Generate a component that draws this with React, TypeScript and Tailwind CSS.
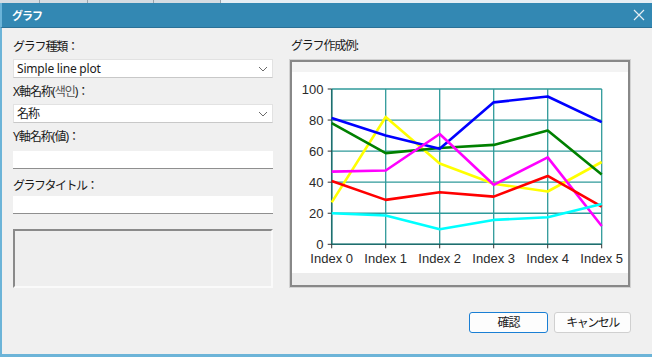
import React from "react";

const XS = [331.7, 385.7, 439.7, 493.7, 547.7, 601.7];
const Y0 = 244.3;
const K = 1.553;
const yOf = (v: number) => Y0 - v * K;

const SERIES: { color: string; data: number[] }[] = [
  { color: "#00ff00", data: [] },
  { color: "#ffff00", data: [27, 82, 52, 39, 34, 53] },
  { color: "#008000", data: [78, 58.7, 62, 64, 73.3, 45] },
  { color: "#0000ff", data: [81.3, 70, 61.5, 91.4, 95.2, 78.7] },
  { color: "#ff00ff", data: [46.8, 47.5, 71, 38.3, 56, 11.8] },
  { color: "#ff0000", data: [40.8, 28.6, 33.5, 30.7, 44, 24.3] },
  { color: "#00ffff", data: [20, 18.5, 9.7, 15.7, 17.4, 26] },
];

const font = { fontFamily: '"Noto Sans", "Noto Sans CJK JP", sans-serif' };
const chartFont = '"Liberation Sans", Arial, sans-serif';

function Chevron() {
  return (
    <svg width="10" height="6" viewBox="0 0 10 6" className="mr-[4px]">
      <path d="M1 1 L5 5 L9 1" fill="none" stroke="#6a6a6a" strokeWidth="1" />
    </svg>
  );
}

function Chart() {
  const gridYs = [0, 20, 40, 60, 80, 100];
  return (
    <svg width="336" height="201" viewBox="292 72 336 201" className="block">
      <rect x="292" y="72" width="336" height="201" fill="#ffffff" />
      {gridYs.map((g) => (
        <line key={"h" + g} x1={XS[0]} x2={XS[5]} y1={yOf(g)} y2={yOf(g)} stroke="#2f9a9a" strokeWidth="1.3" />
      ))}
      {XS.map((x, i) => (
        <line key={"v" + i} x1={x} x2={x} y1={yOf(100)} y2={Y0} stroke="#2f9a9a" strokeWidth="1.3" />
      ))}
      <line x1={XS[0]} x2={XS[5]} y1={Y0} y2={Y0} stroke="#1f6e6e" strokeWidth="1.5" />
      <line x1={XS[0]} x2={XS[0]} y1={yOf(100)} y2={Y0} stroke="#1f6e6e" strokeWidth="1.5" />
      {gridYs.map((g) => (
        <line key={"ty" + g} x1={XS[0] - 4} x2={XS[0]} y1={yOf(g)} y2={yOf(g)} stroke="#333" strokeWidth="1" />
      ))}
      {XS.map((x, i) => (
        <line key={"tx" + i} x1={x} x2={x} y1={Y0} y2={Y0 + 4} stroke="#333" strokeWidth="1" />
      ))}
      {SERIES.filter((s) => s.data.length).map((s) => (
        <polyline
          key={s.color}
          points={s.data.map((v, i) => `${XS[i]},${yOf(v)}`).join(" ")}
          fill="none"
          stroke={s.color}
          strokeWidth="2.6"
          strokeLinejoin="round"
        />
      ))}
      {gridYs.map((g) => (
        <text
          key={"l" + g}
          x={323.5}
          y={yOf(g) + 4.6}
          textAnchor="end"
          fontSize="13"
          fontFamily={chartFont}
          fill="#2a2a2a"
        >
          {g}
        </text>
      ))}
      {XS.map((x, i) => (
        <text
          key={"xl" + i}
          x={x}
          y={262.8}
          textAnchor="middle"
          fontSize="13"
          fontFamily={chartFont}
          fill="#2a2a2a"
        >
          {`Index ${i}`}
        </text>
      ))}
    </svg>
  );
}

export default function App() {
  return (
    <div className="w-[652px] h-[357px] overflow-hidden flex flex-col bg-[#f0f0f0] text-[#1a1a1a]" style={font}>
      {/* top strip */}
      <div className="h-[3px] flex bg-[#e9eff4]">
        <div className="w-[40px] border-r border-[#9aa4ac] bg-[#d5dce2]" />
        <div className="w-[48px] border-r border-[#9aa4ac] bg-[#d5dce2]" />
        <div className="w-[66px] border-r border-[#9aa4ac] bg-[#d5dce2]" />
        <div className="w-[67px] border-r border-[#9aa4ac] bg-[#d5dce2]" />
        <div className="flex-1 bg-[#e6eef4]" />
      </div>
      {/* title bar */}
      <div className="h-[25px] bg-[#3388b3] border-b border-[#2b7197] border-l-2 border-l-[#6cb4d8] flex items-center justify-between">
        <span className="ml-[10px] text-[11px] text-white font-bold tracking-[-1px] leading-none">グラフ</span>
        <svg width="12" height="12" viewBox="0 0 12 12" className="mr-[7px]">
          <path d="M1 1 L11 11 M11 1 L1 11" stroke="#e6eef3" strokeWidth="1.2" />
        </svg>
      </div>
      {/* body */}
      <div className="flex-1 flex flex-col border-l-2 border-[#6cb4d8] border-b-[3px]">
        <div className="flex">
          {/* left column */}
          <div className="ml-[11px] w-[260px] pt-[11px] flex flex-col text-[12px]">
            <div className="h-[16px] leading-[16px] tracking-[-1.2px]">グラフ種類：</div>
            <div className="mt-[4px] h-[19px] bg-white border border-[#e2e2e2] border-b-[#c8c8c8] flex items-center justify-between pl-[3px]">
              <span className="text-[12px] tracking-[-0.2px]">Simple line plot</span>
              <Chevron />
            </div>
            <div className="mt-[6px] h-[16px] leading-[16px] tracking-[-1px]">
              X軸名称(<span className="text-[#555]">색인</span>)：
            </div>
            <div className="mt-[4px] h-[19px] bg-white border border-[#e2e2e2] border-b-[#c8c8c8] flex items-center justify-between pl-[3px]">
              <span className="tracking-[-1px]">名称</span>
              <Chevron />
            </div>
            <div className="mt-[6px] h-[16px] leading-[16px] tracking-[-1px]">Y軸名称(値)：</div>
            <div className="mt-[6px] h-[18px] bg-white border-b border-[#8f8f8f]" />
            <div className="mt-[9px] h-[16px] leading-[16px] tracking-[-1.5px]">グラフタイトル：</div>
            <div className="mt-[2px] h-[18px] bg-white border-b border-[#8f8f8f]" />
            <div className="mt-[15px] h-[59px] border-2 border-[#8a8a8a] border-r-[#fafafa] border-b-[#fafafa] bg-[#efefef]" />
          </div>
          {/* right column */}
          <div className="ml-[16px] pt-[10px] flex flex-col">
            <div className="ml-[2px] h-[16px] leading-[16px] text-[12px] tracking-[-1.2px]">グラフ作成例:</div>
            <div className="mt-[5px] w-[342px] h-[229px] border border-[#d2d2d2]">
              <div className="w-full h-full border-2 border-[#888888] flex flex-col bg-white">
                <div className="h-[10px] bg-[#f3f3f3]" />
                <Chart />
                <div className="h-[12px] bg-[#ececec]" />
              </div>
            </div>
          </div>
        </div>
        <div className="mt-[24px] flex justify-end pr-[21px] gap-[6px] text-[12px]">
          <div className="w-[79px] h-[21px] rounded-[3px] border border-[#1a7fd4] bg-[#fdfdfd] flex items-center justify-center tracking-[-1px]">
            確認
          </div>
          <div className="w-[77px] h-[21px] rounded-[3px] border border-[#d0d0d0] bg-[#fdfdfd] flex items-center justify-center tracking-[-1.5px]">
            キャンセル
          </div>
        </div>
      </div>
    </div>
  );
}
